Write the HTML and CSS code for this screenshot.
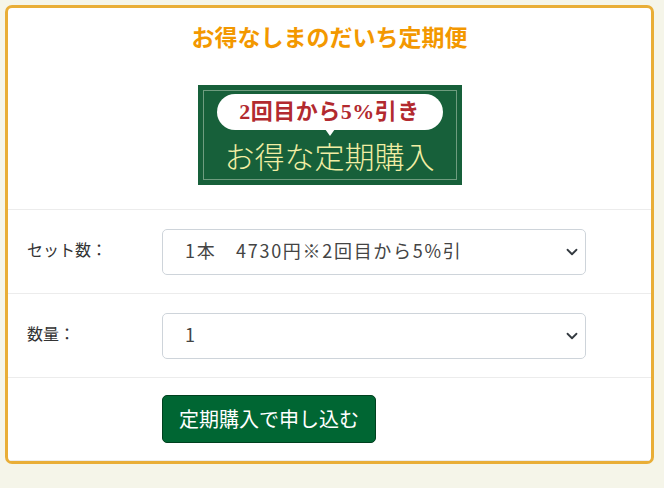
FILE: index.html
```html
<!DOCTYPE html>
<html lang="ja">
<head>
<meta charset="utf-8">
<title>お得なしまのだいち定期便</title>
<link rel="stylesheet" href="styles.css">
</head>
<body>
<div class="card">
  <div class="head">
    <h2 class="title">お得なしまのだいち定期便</h2>
    <div class="banner">
      <div class="bubble">2回目から5%引き</div>
      <div class="banner-main">お得な定期購入</div>
    </div>
  </div>
  <div class="row">
    <label class="label" for="set">セット数：</label>
    <select class="select" id="set">
      <option>1本　4730円※2回目から5%引</option>
    </select>
  </div>
  <div class="row">
    <label class="label" for="qty">数量：</label>
    <select class="select" id="qty">
      <option>1</option>
    </select>
  </div>
  <div class="row">
    <span class="label"></span>
    <button class="btn" type="button">定期購入で申し込む</button>
  </div>
</div>
</body>
</html>
```

FILE: styles.css
```css
* { box-sizing: border-box; }
body {
  margin: 0;
  background: #f5f5e9;
  font-family: "Noto Sans CJK JP", "Noto Sans", sans-serif;
  color: #333;
}
.card {
  width: 649px;
  margin: 5px 0 0 5px;
  border: 3px solid #e9ae37;
  border-radius: 7px;
  background: #fff;
  overflow: hidden;
}
.head {
  display: flex;
  flex-direction: column;
  align-items: center;
  padding: 11px 0 24px;
}
.title {
  margin: 0;
  font-size: 23px;
  line-height: 34px;
  font-weight: bold;
  color: #f39800;
}
.banner {
  margin-top: 32px;
  width: 264px;
  height: 100px;
  background: #17603a;
  border: 4px solid #17603a;
  outline: 1px solid #6f9c7f;
  outline-offset: -6px;
  display: flex;
  flex-direction: column;
  align-items: center;
  position: relative;
}
.bubble {
  position: relative;
  margin-top: 5px;
  width: 226px;
  height: 36px;
  background: #fff;
  border-radius: 18px;
  color: #b22a2f;
  font-family: "Liberation Serif", "Noto Sans CJK JP", serif;
  font-weight: bold;
  font-size: 22px;
  line-height: 36px;
  text-align: center;
  letter-spacing: 0.5px;
}
.bubble::after {
  content: "";
  position: absolute;
  left: 50%;
  bottom: -6px;
  margin-left: -5px;
  border-left: 5px solid transparent;
  border-right: 5px solid transparent;
  border-top: 7px solid #fff;
}
.banner-main {
  margin-top: 5px;
  color: #f2eea4;
  font-size: 30px;
  line-height: 40px;
  font-weight: 300;
}
.row {
  display: flex;
  align-items: center;
  height: 84px;
  border-top: 1px solid #ececec;
}
.row:last-child {
  border-bottom: 1px solid #ececec;
}
.label {
  width: 154px;
  padding: 0 0 5px 19px;
  font-size: 16px;
  color: #333;
}
.select {
  appearance: none;
  -webkit-appearance: none;
  width: 424px;
  height: 46px;
  padding: 0 30px 3px 22px;
  border: 1px solid #ced4da;
  border-radius: 5px;
  background: #fff url("data:image/svg+xml,%3csvg xmlns='http://www.w3.org/2000/svg' viewBox='0 0 16 16'%3e%3cpath fill='none' stroke='%23343a40' stroke-linecap='round' stroke-linejoin='round' stroke-width='2.4' d='M2 5l6 6 6-6'/%3e%3c/svg%3e") no-repeat right 5px center / 16px 12px;
  font-family: "Noto Sans CJK JP", "Noto Sans", sans-serif;
  font-size: 18px;
  letter-spacing: 1.7px;
  color: #444;
}
.btn {
  height: 48px;
  padding: 0 16px 2px;
  background: #006633;
  border: 1px solid #00401f;
  border-radius: 5px;
  color: #fff;
  font-family: "Noto Sans CJK JP", "Noto Sans", sans-serif;
  font-size: 20px;
}
```
